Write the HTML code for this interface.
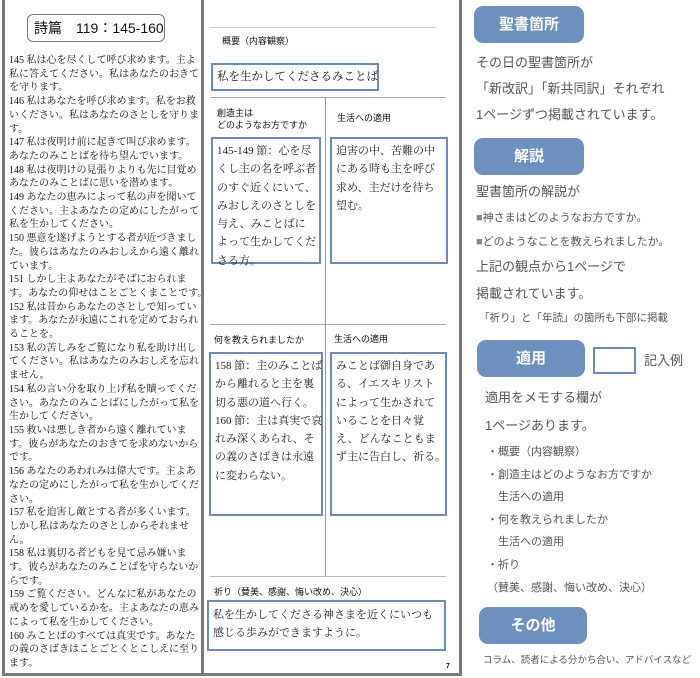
<!DOCTYPE html>
<html><head><meta charset="utf-8"><style>
*{margin:0;padding:0;box-sizing:border-box}
body{width:700px;height:678px;background:#fff;position:relative;overflow:hidden;font-family:"Liberation Serif","Noto Serif CJK SC",serif;color:#111}
.a{position:absolute}
.s{font-family:"Liberation Sans","Noto Sans CJK JP",sans-serif}
.frame{left:2px;top:0;width:460px;height:676px;border:3px solid #7a7a7a;border-top:none}
.div{left:201px;top:0;width:3px;height:676px;background:#7a7a7a}
.lt{left:9px;top:54px;width:192px;font-size:10px;line-height:13.7px;white-space:nowrap}
.hl{height:1px;background:#aaa}
.box{border:2px solid #6a8bc0}
.bx{font-size:11px;line-height:18.3px;padding:3px 4px;white-space:nowrap;color:#222}
.btn{background:#6d90be;border-radius:9px;color:#fff;font-weight:bold;font-size:15px;text-align:center;font-family:"Liberation Sans","Noto Sans CJK JP",sans-serif}
.r{color:#555;font-family:"Liberation Sans","Noto Sans CJK JP",sans-serif;white-space:nowrap}
</style></head><body>
<div class="a frame"></div>
<div class="a div"></div>
<div class="a s" style="left:27px;top:14px;width:138px;height:28px;border:1px solid #777;border-radius:6px;font-size:14px;line-height:26px;padding-left:6px;white-space:nowrap">詩篇　119：145-160</div>
<div class="a lt">
145 私は心を尽くして呼び求めます。主よ<br>私に答えてください。私はあなたのおきて<br>を守ります。<br>146 私はあなたを呼び求めます。私をお救<br>いください。私はあなたのさとしを守りま<br>す。<br>147 私は夜明け前に起きて叫び求めます。<br>あなたのみことばを待ち望んでいます。<br>148 私は夜明けの見張りよりも先に目覚め<br>あなたのみことばに思いを潜めます。<br>149 あなたの恵みによって私の声を聞いて<br>ください。主よあなたの定めにしたがって<br>私を生かしてください。<br>150 悪意を遂げようとする者が近づきまし<br>た。彼らはあなたのみおしえから遠く離れ<br>ています。<br>151 しかし主よあなたがそばにおられま<br>す。あなたの仰せはことごとくまことです。<br>152 私は昔からあなたのさとしで知ってい<br>ます。あなたが永遠にこれを定めておられ<br>ることを。<br>153 私の苦しみをご覧になり私を助け出し<br>てください。私はあなたのみおしえを忘れ<br>ません。<br>154 私の言い分を取り上げ私を贖ってくだ<br>さい。あなたのみことばにしたがって私を<br>生かしてください。<br>155 救いは悪しき者から遠く離れていま<br>す。彼らがあなたのおきてを求めないから<br>です。<br>156 あなたのあわれみは偉大です。主よあ<br>なたの定めにしたがって私を生かしてくだ<br>さい。<br>157 私を迫害し敵とする者が多くいます。<br>しかし私はあなたのさとしからそれませ<br>ん。<br>158 私は裏切る者どもを見て忌み嫌いま<br>す。彼らがあなたのみことばを守らないか<br>らです。<br>159 ご覧ください。どんなに私があなたの<br>戒めを愛しているかを。主よあなたの恵み<br>によって私を生かしてください。<br>160 みことばのすべては真実です。あなた<br>の義のさばきはことごとくとこしえに至り<br>ます。
</div>

<div class="a hl" style="left:210px;top:27px;width:226px;background:#ccc"></div>
<div class="a s" style="left:222px;top:34px;font-size:9px">概要（内容観察）</div>
<div class="a box" style="left:211px;top:63px;width:168px;height:28px;font-size:11.5px;line-height:24px;padding-left:4px;white-space:nowrap">私を生かしてくださるみことば</div>
<div class="a hl" style="left:210px;top:97px;width:236px"></div>
<div class="a" style="left:325px;top:97px;width:1px;height:228px;background:#999"></div>
<div class="a hl" style="left:210px;top:324px;width:236px"></div>
<div class="a" style="left:325px;top:324px;width:1px;height:252px;background:#999"></div>
<div class="a hl" style="left:210px;top:576px;width:236px;background:#bbb"></div>
<div class="a s" style="left:217px;top:107px;font-size:9px;line-height:12px">創造主は<br>どのようなお方ですか</div>
<div class="a s" style="left:337px;top:111px;font-size:9px">生活への適用</div>
<div class="a box bx" style="left:211px;top:137px;width:110px;height:127px">145-149 節：心を尽<br>くし主の名を呼ぶ者<br>のすぐ近くにいて、<br>みおしえのさとしを<br>与え、みことばに<br>よって生かしてくだ<br>さる方。</div>
<div class="a box bx" style="left:330px;top:137px;width:118px;height:127px">迫害の中、苦難の中<br>にある時も主を呼び<br>求め、主だけを待ち<br>望む。</div>
<div class="a s" style="left:214px;top:333px;font-size:9px">何を教えられましたか</div>
<div class="a s" style="left:334px;top:332px;font-size:9px">生活への適用</div>
<div class="a box bx" style="left:209px;top:352px;width:114px;height:164px">158 節：主のみことば<br>から離れると主を裏<br>切る悪の道へ行く。<br>160 節：主は真実で哀<br>れみ深くあられ、そ<br>の義のさばきは永遠<br>に変わらない。</div>
<div class="a box bx" style="left:330px;top:352px;width:117px;height:164px">みことば御自身であ<br>る、イエスキリスト<br>によって生かされて<br>いることを日々覚<br>え、どんなこともま<br>ず主に告白し、祈る。</div>
<div class="a s" style="left:214px;top:585px;font-size:9px">祈り（賛美、感謝、悔い改め、決心）</div>
<div class="a box bx" style="left:207px;top:600px;width:239px;height:51px;padding-top:4px">私を生かしてくださる神さまを近くにいつも<br>感じる歩みができますように。</div>
<div class="a s" style="left:446px;top:663px;font-size:7px;font-weight:bold">7</div>

<div class="a btn" style="left:474px;top:6px;width:110px;height:37px;line-height:37px">聖書箇所</div>
<div class="a r" style="left:476px;top:52px;font-size:13px">その日の聖書箇所が</div>
<div class="a r" style="left:476px;top:78px;font-size:13px">「新改訳」「新共同訳」それぞれ</div>
<div class="a r" style="left:476px;top:104px;font-size:13px">1ページずつ掲載されています。</div>
<div class="a btn" style="left:474px;top:138px;width:110px;height:37px;line-height:37px">解説</div>
<div class="a r" style="left:476px;top:181px;font-size:13px">聖書箇所の解説が</div>
<div class="a r" style="left:476px;top:209px;font-size:11px"><span style="color:#888">■</span>神さまはどのようなお方ですか。</div>
<div class="a r" style="left:476px;top:233px;font-size:11px"><span style="color:#888">■</span>どのようなことを教えられましたか。</div>
<div class="a r" style="left:476px;top:256px;font-size:13px">上記の観点から1ページで</div>
<div class="a r" style="left:476px;top:283px;font-size:13px">掲載されています。</div>
<div class="a r" style="left:479px;top:310px;font-size:10.5px">「祈り」と「年読」の箇所も下部に掲載</div>
<div class="a btn" style="left:477px;top:340px;width:108px;height:37px;line-height:37px">適用</div>
<div class="a" style="left:593px;top:347px;width:43px;height:27px;border:2px solid #6a8bc0"></div>
<div class="a r" style="left:644px;top:350px;font-size:13px">記入例</div>
<div class="a r" style="left:485px;top:387px;font-size:13px">適用をメモする欄が</div>
<div class="a r" style="left:485px;top:415px;font-size:13px">1ページあります。</div>
<div class="a r" style="left:487px;top:441px;font-size:11px;line-height:22.6px">・概要（内容観察）<br>・創造主はどのようなお方ですか<br>　生活への適用<br>・何を教えられましたか<br>　生活への適用<br>・祈り<br>（賛美、感謝、悔い改め、決心）</div>
<div class="a btn" style="left:479px;top:607px;width:108px;height:37px;line-height:37px">その他</div>
<div class="a r" style="left:483px;top:652px;font-size:9.5px">コラム、読者による分かち合い、アドバイスなど</div>
</body></html>
